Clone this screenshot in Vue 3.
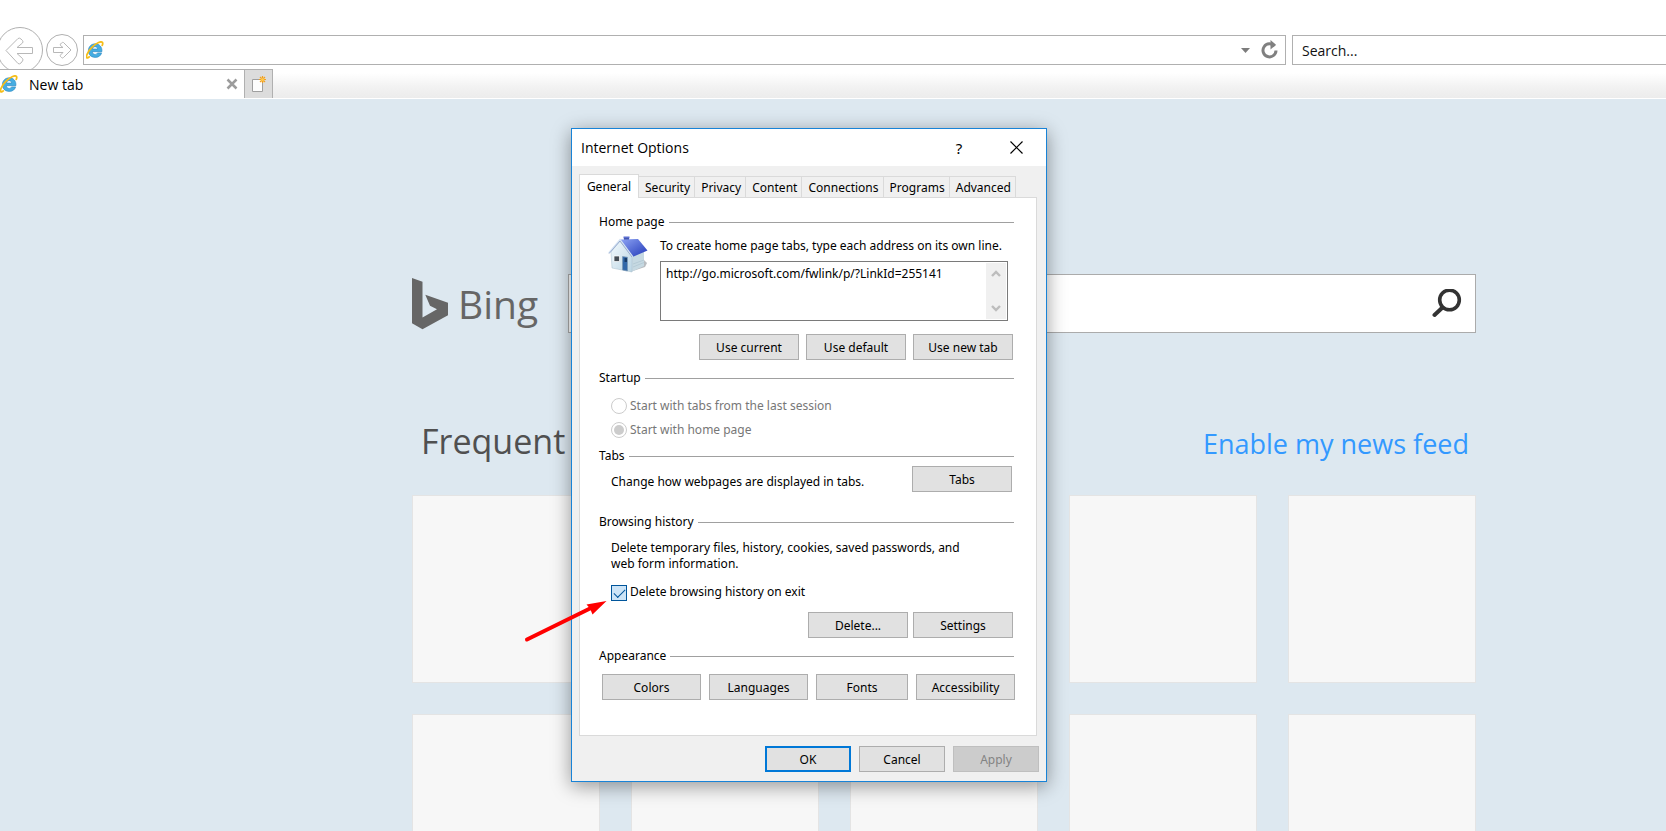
<script setup>
import { ref } from 'vue'

const tabs = ['General', 'Security', 'Privacy', 'Content', 'Connections', 'Programs', 'Advanced']
const activeTab = ref('General')
const homePage = ref('http://go.microsoft.com/fwlink/p/?LinkId=255141')
const startup = ref('home')
const deleteOnExit = ref(true)
const tiles = 10
</script>

<template>
  <div class="browser">
    <header class="chrome">
      <div class="nav-row">
        <button class="nav-button back" aria-label="Back">
          <svg width="43" height="46" viewBox="0 0 43 46">
            <circle cx="20" cy="23" r="22.5" fill="#fff" stroke="#b0b0b0" />
            <path d="M6 23.500L18 11.500q1.500-1 3 .5l1.500 1.500q1 1.500 0 2.500l-5.500 4.500H32.500v6H17l5.500 5q1 1.500 0 2.500L21 36q-1.500 1.500-3 .5z" fill="#fff" stroke="#b8b8b8" />
          </svg>
        </button>
        <button class="nav-button forward" aria-label="Forward">
          <svg width="32" height="32" viewBox="0 0 32 32">
            <circle cx="16" cy="16" r="15.500" fill="#fff" stroke="#b0b0b0" />
            <path d="M25 16l-7.500-7.500q-1-.5-2 .5l-1 1q-.5 1 0 1.500l2.500 2H7.500v5H17l-2.500 2.500q-.5.5 0 1.500l1 1q1 1 2 0z" fill="#fff" stroke="#b8b8b8" />
          </svg>
        </button>
        <div class="address">
          <svg class="ie" width="18" height="18" viewBox="0 0 18 18">
            <path d="M15.600 11.900H11.500c-.5 1-1.300 1.500-2.400 1.500-1.600 0-2.600-1-2.700-2.700h9.500c.5-4.600-2.400-7.900-6.700-7.900C5.400 2.800 2.400 5.600 2.400 9.700c0 4.100 2.800 6.700 6.900 6.700 3.200 0 5.500-1.600 6.300-4.500zM6.500 8c.2-1.500 1.200-2.300 2.600-2.300S11.600 6.500 11.700 8z" fill="#45ade2" stroke="#2583bd" stroke-width=".6" />
            <path d="M3.200 15.900C.9 18.200-.2 16.500 1.200 13 2.800 9 8.200 3.300 12.600 1.500c3.600-1.500 4.800-.1 3.700 2.800" fill="none" stroke="#f5bd18" stroke-width="1.800" stroke-linecap="round" />
          </svg>
          <input class="address-input" type="text" aria-label="Address" />
          <svg width="9" height="5" viewBox="0 0 9 5"><path d="M0 0h9L4.500 5z" fill="#7c7c7c" /></svg>
          <button class="plain" aria-label="Refresh">
            <svg width="18" height="20" viewBox="0 0 18 20">
              <path d="M13.500 6.200A6.500 6.500 0 1 0 15 10.500" fill="none" stroke="#808080" stroke-width="3" />
              <path d="M9.500 0l5.500 4.700-5.500 4.800z" fill="#808080" />
            </svg>
          </button>
        </div>
        <input class="search" type="text" aria-label="Search" placeholder="Search..." />
      </div>
      <div class="tab-row">
        <div class="browser-tab">
          <svg class="ie" width="18" height="18" viewBox="0 0 18 18">
            <path d="M15.600 11.900H11.500c-.5 1-1.300 1.500-2.400 1.500-1.600 0-2.600-1-2.700-2.700h9.500c.5-4.600-2.400-7.900-6.700-7.900C5.400 2.800 2.400 5.600 2.400 9.700c0 4.100 2.800 6.700 6.900 6.700 3.200 0 5.500-1.600 6.300-4.500zM6.500 8c.2-1.500 1.200-2.300 2.600-2.300S11.600 6.500 11.700 8z" fill="#45ade2" stroke="#2583bd" stroke-width=".6" />
            <path d="M3.200 15.900C.9 18.200-.2 16.500 1.200 13 2.800 9 8.200 3.300 12.600 1.500c3.600-1.500 4.800-.1 3.700 2.800" fill="none" stroke="#f5bd18" stroke-width="1.800" stroke-linecap="round" />
          </svg>
          <span class="browser-tab-title">New tab</span>
          <button class="plain" aria-label="Close tab">
            <svg width="12" height="12" viewBox="0 0 12 12"><path d="M1.500 1.500l9 9M10.500 1.500l-9 9" stroke="#9c9c9c" stroke-width="2.500" /></svg>
          </button>
        </div>
        <button class="new-tab" aria-label="New tab">
          <svg width="16" height="16" viewBox="0 0 16 16">
            <path d="M1.500 3.500h10v12h-10z" fill="#fdfdfd" stroke="#9f9f9f" />
            <path d="M11.500 0v7M8 3.500h7M9 1l5 5M14 1L9 6" stroke="#f3a01c" stroke-width="1.200" />
            <circle cx="11.500" cy="3.500" r="1.600" fill="#ffc94d" />
          </svg>
        </button>
      </div>
    </header>

    <main class="start-page">
      <div class="content">
        <div class="bing-row">
          <svg class="bing-logo" width="37" height="52" viewBox="0 0 37 52">
            <path d="M0 0l10.500 3.700V39.500L25 31.200l-7-3.500-4.700-11L36 24.700v12.500L10.500 51.300 0 45.300z" fill="#666" />
          </svg>
          <span class="bing-name">Bing</span>
          <div class="bing-search">
            <input class="bing-input" type="text" aria-label="Search the web" />
            <button class="plain" aria-label="Search Bing">
              <svg width="30" height="30" viewBox="0 0 30 30">
                <circle cx="17.500" cy="11" r="9.800" fill="none" stroke="#333" stroke-width="3.600" />
                <path d="M10.500 18.500L2.500 26" stroke="#333" stroke-width="4" stroke-linecap="round" />
              </svg>
            </button>
          </div>
        </div>
        <div class="heading-row">
          <h1 class="frequent">Frequent</h1>
          <a class="feed" href="#">Enable my news feed</a>
        </div>
        <div class="tiles">
          <div v-for="n in tiles" :key="n" class="tile"></div>
        </div>
      </div>
    </main>

    <section class="dialog" role="dialog" aria-labelledby="dialog-title">
      <div class="title-bar">
        <h2 id="dialog-title" class="title">Internet Options</h2>
        <button class="plain help" aria-label="Help">?</button>
        <button class="plain close" aria-label="Close">
          <svg width="13" height="13" viewBox="0 0 13 13"><path d="M.5.5l12 12M12.500.5l-12 12" stroke="#000" stroke-width="1.200" /></svg>
        </button>
      </div>

      <div class="tab-strip" role="tablist">
        <button
          v-for="t in tabs"
          :key="t"
          class="tab"
          :class="{ active: t === activeTab }"
          role="tab"
          :aria-selected="t === activeTab"
          @click="activeTab = t"
        >{{ t }}</button>
      </div>

      <div class="panel">
        <div class="group-title">Home page</div>
        <div class="home">
          <svg class="house" width="40" height="38" viewBox="0 0 40 38">
            <defs>
              <linearGradient id="roof" x1="0" y1="0" x2="1" y2="1">
                <stop offset="0" stop-color="#8ea4f4" /><stop offset="1" stop-color="#2138b8" />
              </linearGradient>
              <linearGradient id="wall" x1="0" y1="0" x2="1" y2="1">
                <stop offset="0" stop-color="#f2f9fd" /><stop offset="1" stop-color="#bcd6e4" />
              </linearGradient>
            </defs>
            <path d="M22 36l15-5 2-4-4-4z" fill="#b9bdc1" />
            <path d="M16 1h5v8h-5z" fill="#2c3f91" />
            <path d="M15.500.5h6v2h-6z" fill="#5c6fd0" />
            <path d="M22 20l14-5v15l-13 6z" fill="#c6d9e2" />
            <path d="M3 16L12 5l12 15v16L4 32z" fill="url(#wall)" stroke="#a8bfcc" stroke-width=".5" />
            <path d="M12 3.500L30 3l9.500 11.500L24.500 21z" fill="url(#roof)" />
            <path d="M.8 17L12 3.800 24.800 21" fill="none" stroke="#d5e3f3" stroke-width="1.600" />
            <path d="M1 17.600L12 5l12 16" fill="none" stroke="#6e86b8" stroke-width=".6" />
            <path d="M6 20h5.500v5.500H6z" fill="#444d55" stroke="#fff" stroke-width=".7" />
            <path d="M14.500 20.500l5 .7V35l-5-1z" fill="#3268a8" stroke="#7896b0" stroke-width=".6" />
            <path d="M16.500 22h2.500v4h-2.500z" fill="#173b68" />
            <path d="M25 28l11-4M25 31l11-4.500" stroke="#aac1cd" stroke-width=".6" />
          </svg>
          <div class="home-fields">
            <label for="home-page">To create home page tabs, type each address on its own line.</label>
            <div class="address-list">
              <textarea id="home-page" v-model="homePage" spellcheck="false"></textarea>
              <div class="scrollbar">
                <svg width="10" height="7" viewBox="0 0 10 7"><path d="M1 6l4-4 4 4" fill="none" stroke="#bdbdbd" stroke-width="2.400" /></svg>
                <svg width="10" height="7" viewBox="0 0 10 7"><path d="M1 1l4 4 4-4" fill="none" stroke="#bdbdbd" stroke-width="2.400" /></svg>
              </div>
            </div>
          </div>
        </div>
        <div class="buttons home-buttons">
          <button class="button">Use current</button>
          <button class="button">Use default</button>
          <button class="button">Use new tab</button>
        </div>

        <div class="group-title startup-title">Startup</div>
        <div class="startup">
          <label class="choice"><input v-model="startup" type="radio" name="startup" value="last" disabled />Start with tabs from the last session</label>
          <label class="choice"><input v-model="startup" type="radio" name="startup" value="home" disabled />Start with home page</label>
        </div>

        <div class="group-title">Tabs</div>
        <div class="tabs-body">
          <span>Change how webpages are displayed in tabs.</span>
          <button class="button">Tabs</button>
        </div>

        <div class="group-title">Browsing history</div>
        <div class="history">
          <p>Delete temporary files, history, cookies, saved passwords, and<br />web form information.</p>
          <label class="check"><input v-model="deleteOnExit" type="checkbox" /><span>Delete browsing history on exit</span></label>
        </div>
        <div class="buttons history-buttons">
          <button class="button">Delete...</button>
          <button class="button">Settings</button>
        </div>

        <div class="group-title">Appearance</div>
        <div class="appearance">
          <button class="button">Colors</button>
          <button class="button">Languages</button>
          <button class="button narrow">Fonts</button>
          <button class="button">Accessibility</button>
        </div>
      </div>

      <div class="footer">
        <button class="button default">OK</button>
        <button class="button">Cancel</button>
        <button class="button" disabled>Apply</button>
      </div>

      <svg class="arrow" width="84" height="44" viewBox="0 0 84 44">
        <path d="M4 40.500L68 9" stroke="#f00" stroke-width="4" stroke-linecap="round" />
        <path d="M83.500 2L63.500 5.500 67 9.500 69.500 15.500z" fill="#f00" />
      </svg>
    </section>
  </div>
</template>

<style>
body {
  margin: 0;
}
</style>

<style scoped>
.browser {
  position: relative;
  display: flex;
  flex-direction: column;
  height: 100vh;
  overflow: hidden;
  background: #dde8f0;
  font-family: "Open Sans", "Noto Sans", sans-serif;
  font-size: 14px;
  color: #000;
}

button,
input,
textarea {
  box-sizing: border-box;
  font: inherit;
  color: inherit;
}

.plain {
  display: flex;
  align-items: center;
  justify-content: center;
  padding: 0;
  border: 0;
  background: none;
}

/* Browser chrome */
.chrome {
  flex: none;
  padding-top: 27px;
  background: #fff;
}

.nav-row {
  display: flex;
  align-items: flex-start;
  height: 42px;
  overflow: hidden;
}

.nav-button {
  flex: none;
  display: block;
  padding: 0;
  border: 0;
  background: none;
}

.nav-button svg {
  display: block;
}

.forward {
  margin: 7px 5px 0 3px;
}

.address {
  flex: 1;
  min-width: 0;
  display: flex;
  align-items: center;
  box-sizing: border-box;
  height: 30px;
  margin-top: 8px;
  padding: 0 6px 0 2px;
  border: 1px solid #b0b0b0;
  background: #fff;
}

.ie {
  flex: none;
}

.address-input {
  flex: 1;
  min-width: 0;
  height: 26px;
  padding: 0 6px;
  border: 0;
  outline: 0;
  background: none;
}

.address .plain {
  margin-left: 11px;
}

.search {
  flex: none;
  width: 374px;
  height: 30px;
  margin: 8px 0 0 6px;
  padding: 0 9px;
  border: 1px solid #b0b0b0;
  border-right: 0;
  background: #fff;
}

.search::placeholder {
  color: #111;
  opacity: 1;
}

.tab-row {
  display: flex;
  height: 29px;
  border-bottom: 1px solid #fff;
  background: linear-gradient(#fff 4px, #f2f2f2 18px, #ececec);
}

.browser-tab {
  display: flex;
  align-items: center;
  box-sizing: border-box;
  width: 245px;
  padding: 0 6px 0 0;
  border: 1px solid #b0b0b0;
  border-width: 1px 1px 0 0;
  background: #fff;
}

.browser-tab-title {
  flex: 1;
  padding-left: 11px;
}

.new-tab {
  display: flex;
  align-items: center;
  justify-content: center;
  width: 28px;
  padding: 0;
  border: 1px solid #b0b0b0;
  border-width: 1px 1px 0 0;
  background: #dcdcdc;
}

/* Start page */
.start-page {
  flex: 1;
  min-height: 0;
  padding: 175px 0 0 412px;
}

.content {
  width: 1064px;
}

.bing-row {
  display: flex;
  align-items: center;
  height: 59px;
}

.bing-name {
  flex: none;
  box-sizing: border-box;
  width: 119px;
  padding-left: 9px;
  font-size: 39px;
  line-height: 56px;
  color: #666;
}

.bing-logo {
  flex: none;
}

.bing-search {
  flex: 1;
  display: flex;
  align-items: center;
  box-sizing: border-box;
  height: 59px;
  padding-right: 13px;
  border: 1px solid #ababab;
  background: #fff;
}

.bing-input {
  flex: 1;
  height: 50px;
  border: 0;
  outline: 0;
  background: none;
}

.heading-row {
  display: flex;
  align-items: baseline;
  justify-content: space-between;
  margin: 84px 0 27px;
  padding: 0 7px 0 9px;
  line-height: 48px;
}

.frequent {
  margin: 0;
  font-size: 34px;
  font-weight: 400;
  color: #505050;
}

.feed {
  font-size: 27px;
  color: #3399ff;
  text-decoration: none;
}

.tiles {
  display: grid;
  grid-template-columns: repeat(5, 1fr);
  gap: 31px;
}

.tile {
  box-sizing: border-box;
  aspect-ratio: 1;
  border: 1px solid #e4e4e4;
  background: #f7f7f7;
}

/* Dialog */
.dialog {
  position: absolute;
  top: 128px;
  left: 571px;
  box-sizing: border-box;
  width: 476px;
  border: 1px solid #1883d7;
  background: #f0f0f0;
  box-shadow: 0 4px 18px rgba(0, 0, 0, 0.4);
  font-family: "Noto Sans", "Open Sans", sans-serif;
  font-size: 12px;
  line-height: 16px;
}

.title-bar {
  display: flex;
  align-items: center;
  height: 37px;
  padding: 0 23px 0 9px;
  background: #fff;
}

.title {
  flex: 1;
  margin: 0;
  font-family: "Open Sans", sans-serif;
  font-size: 14px;
  font-weight: 400;
}

.help {
  width: 16px;
  font-size: 15px;
}

.close {
  margin-left: 43px;
}

.tab-strip {
  display: flex;
  align-items: flex-end;
  width: 437px;
  padding: 8px 0 0 7px;
}

.tab {
  flex: 1 1 auto;
  height: 21px;
  padding: 2px 3px 0 5px;
  border: 1px solid #dadada;
  border-width: 1px 1px 0 0;
  background: #f0f0f0;
}

.tab.active {
  z-index: 1;
  flex: none;
  width: 60px;
  height: 24px;
  margin-bottom: -1px;
  padding: 0;
  border-left-width: 1px;
  background: #fff;
}

.panel {
  margin: 0 9px 0 7px;
  padding: 16px 22px 35px 18px;
  border: 1px solid #dadada;
  background: #fff;
}

.group-title {
  display: flex;
  align-items: center;
  gap: 4px;
  padding-left: 1px;
}

.group-title::after {
  flex: 1;
  height: 1px;
  background: #a0a0a0;
  content: "";
}

.button {
  box-sizing: border-box;
  width: 100px;
  height: 26px;
  padding: 1px 0 0;
  border: 1px solid #adadad;
  background: #e1e1e1;
}

.home {
  display: flex;
  gap: 12px;
  padding: 6px 6px 0 10px;
}

.house {
  flex: none;
}

.home-fields {
  flex: 1;
  min-width: 0;
  padding-top: 2px;
  white-space: nowrap;
}

.home-fields label {
  display: block;
}

.address-list {
  display: flex;
  box-sizing: border-box;
  height: 60px;
  margin-top: 7px;
  padding: 1px;
  border: 1px solid #7a7a7a;
}

textarea {
  flex: 1;
  min-width: 0;
  padding: 3px 4px;
  border: 0;
  outline: 0;
  resize: none;
  overflow: hidden;
  background: none;
}

.scrollbar {
  display: flex;
  flex-direction: column;
  align-items: center;
  justify-content: space-between;
  box-sizing: border-box;
  width: 20px;
  padding: 7px 0;
  background: #f0f0f0;
}

.buttons {
  display: flex;
  justify-content: flex-end;
  padding-right: 1px;
}

.home-buttons {
  gap: 7px;
  margin: 13px 0 10px;
}

.startup {
  margin: 8px 0 6px 13px;
  color: #777;
}

.choice {
  display: flex;
  align-items: center;
  gap: 3px;
  height: 24px;
}

.choice input {
  width: 16px;
  height: 16px;
  margin: 0;
  padding: 2px;
  border: 1px solid #ccc;
  border-radius: 50%;
  appearance: none;
  background: #fff;
}

.choice input:checked {
  background: #ccc content-box;
}

.tabs-body {
  display: flex;
  align-items: flex-end;
  justify-content: space-between;
  padding: 2px 2px 22px 13px;
}

.tabs-body span {
  padding-bottom: 2px;
}

.history {
  padding: 10px 0 0 13px;
  white-space: nowrap;
}

.history p {
  margin: 0 0 13px;
}

.check {
  display: flex;
  gap: 3px;
  line-height: 14px;
}

.check input {
  display: grid;
  place-items: center;
  width: 16px;
  height: 16px;
  margin: 0;
  border: 1px solid #00559b;
  appearance: none;
  background: #cce4f7;
}

.check input:checked::before {
  box-sizing: border-box;
  width: 11px;
  height: 6px;
  margin-bottom: 3px;
  border: solid #00559b;
  border-width: 0 0 1px 1px;
  transform: rotate(-45deg);
  content: "";
}

.history-buttons {
  gap: 5px;
  margin: 11px 0 10px;
}

.appearance {
  display: flex;
  gap: 8px;
  margin-right: -1px;
  padding: 10px 0 0 4px;
}

.appearance .button {
  flex: 14 1 0;
}

.appearance .narrow {
  flex-grow: 13;
}

.footer {
  display: flex;
  justify-content: flex-end;
  gap: 8px;
  padding: 10px 7px 9px;
}

.footer .button {
  width: 86px;
}

.footer .default {
  border: 2px solid #0078d7;
}

.button:disabled {
  border-color: #bfbfbf;
  background: #ccc;
  color: #838383;
}

.arrow {
  position: absolute;
  top: 470px;
  left: -49px;
  pointer-events: none;
}
</style>
